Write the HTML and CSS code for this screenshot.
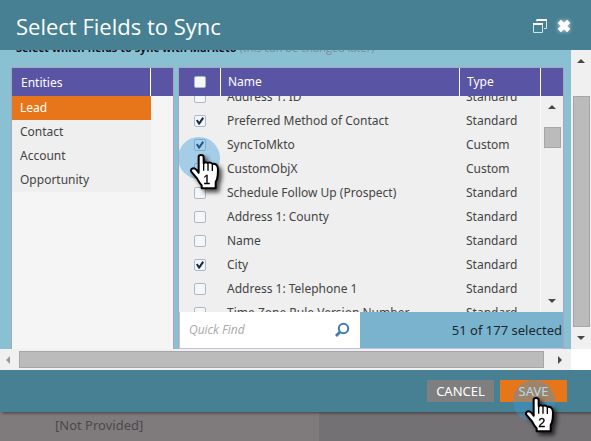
FILE: index.html
```html
<!DOCTYPE html>
<html lang="en">
<head>
<meta charset="utf-8">
<title>Select Fields to Sync</title>
<link rel="stylesheet" href="styles.css">
</head>
<body>
<section class="dialog" role="dialog" aria-labelledby="dialog-title">
  <header class="dialog-header">
    <h1 id="dialog-title">Select Fields to Sync</h1>
    <button class="icon-button" type="button" aria-label="Restore window">
      <svg width="16" height="16" viewBox="0 0 16 16" fill="none" stroke="#d4e5ea">
        <path d="M5 3.5V1.5H14.5V10.5H12"/><path d="M4.500 2H15" stroke="#fff" stroke-width="2"/>
        <path d="M1.500 5.500H10.500V14.500H1.500Z"/><path d="M1 6H11" stroke="#fff" stroke-width="2"/>
      </svg>
    </button>
    <button class="icon-button close" type="button" aria-label="Close">
      <svg width="16" height="16" viewBox="0 0 16 16" fill="none" stroke="#fff" stroke-width="4.600">
        <path d="M3.300 3.300L12.700 12.700M12.700 3.300L3.300 12.700"/>
      </svg>
    </button>
  </header>

  <div class="scroll-frame">
    <main class="content">
      <p class="intro"><strong>Select which fields to sync with Marketo</strong> (this can be changed later)</p>
      <div class="panels">
        <nav class="panel entities" aria-label="Entities">
          <div class="entities-head"><h2>Entities</h2></div>
          <ul>
            <li><a class="selected" href="#lead">Lead</a></li>
            <li><a href="#contact">Contact</a></li>
            <li><a href="#account">Account</a></li>
            <li><a href="#opportunity">Opportunity</a></li>
          </ul>
        </nav>

        <section class="panel fields" aria-label="Fields">
          <table class="fields-head">
            <colgroup><col class="col-check"><col><col class="col-type"><col class="col-bar"></colgroup>
            <thead>
              <tr><th class="check"><input type="checkbox" aria-label="Select all"></th><th>Name</th><th>Type</th><th></th></tr>
            </thead>
          </table>
          <div class="list">
            <div class="list-view">
              <table class="fields-rows">
                <colgroup><col class="col-check"><col><col class="col-type"></colgroup>
                <tbody>
                  <tr><td class="check"><input type="checkbox" id="f1"></td><td><label for="f1">Address 1: ID</label></td><td>Standard</td></tr>
                  <tr><td class="check"><input type="checkbox" id="f2" checked></td><td><label for="f2">Preferred Method of Contact</label></td><td>Standard</td></tr>
                  <tr><td class="check"><input type="checkbox" id="f3" checked><span class="pointer">
                    <svg width="32" height="38" viewBox="0 0 96 114" aria-hidden="true"><path class="hand" d="M29 11Q29 6 36 6Q44 6 44 13V31Q49 25 56 30Q65 26 70 33Q80 30 85 40Q88 45 86 68Q85 80 80 87V106H38V97Q30 88 24 76L6 55Q5 45 16 46Q22 48 29 59Z"/><path class="knuckles" d="M44 28V53M57 33V53M70 36V54"/><text x="43" y="93">1</text></svg>
                  </span></td><td><label for="f3">SyncToMkto</label></td><td>Custom</td></tr>
                  <tr><td class="check"><input type="checkbox" id="f4"></td><td><label for="f4">CustomObjX</label></td><td>Custom</td></tr>
                  <tr><td class="check"><input type="checkbox" id="f5"></td><td><label for="f5">Schedule Follow Up (Prospect)</label></td><td>Standard</td></tr>
                  <tr><td class="check"><input type="checkbox" id="f6"></td><td><label for="f6">Address 1: County</label></td><td>Standard</td></tr>
                  <tr><td class="check"><input type="checkbox" id="f7"></td><td><label for="f7">Name</label></td><td>Standard</td></tr>
                  <tr><td class="check"><input type="checkbox" id="f8" checked></td><td><label for="f8">City</label></td><td>Standard</td></tr>
                  <tr><td class="check"><input type="checkbox" id="f9"></td><td><label for="f9">Address 1: Telephone 1</label></td><td>Standard</td></tr>
                  <tr><td class="check"><input type="checkbox" id="f10"></td><td><label for="f10">Time Zone Rule Version Number</label></td><td>Standard</td></tr>
                </tbody>
              </table>
            </div>
            <div class="scrollbar vertical inner">
              <svg class="arrow" width="8" height="4" viewBox="0 0 8 4"><path d="M4 0L8 4H0Z"/></svg>
              <div class="thumb"></div>
              <svg class="arrow" width="8" height="4" viewBox="0 0 8 4"><path d="M0 0H8L4 4Z"/></svg>
            </div>
          </div>
          <div class="find-bar">
            <div class="find">
              <input type="text" placeholder="Quick Find" aria-label="Quick Find">
              <svg width="16" height="16" viewBox="0 0 16 16" fill="none" stroke="#3f7cb8"><circle cx="9.500" cy="6.500" r="4.700" stroke-width="2"/><path d="M6 10L2 14" stroke-width="2.800"/></svg>
            </div>
            <p>51 of 177 selected</p>
          </div>
        </section>
      </div>
    </main>
    <div class="scrollbar vertical outer">
      <svg class="arrow" width="8" height="4" viewBox="0 0 8 4"><path d="M4 0L8 4H0Z"/></svg>
      <div class="thumb"></div>
      <svg class="arrow" width="8" height="4" viewBox="0 0 8 4"><path d="M0 0H8L4 4Z"/></svg>
    </div>
    <div class="scrollbar horizontal">
      <svg class="arrow dim" width="4" height="8" viewBox="0 0 4 8"><path d="M4 0V8L0 4Z"/></svg>
      <div class="thumb"></div>
      <svg class="arrow" width="4" height="8" viewBox="0 0 4 8"><path d="M0 0L4 4L0 8Z"/></svg>
    </div>
  </div>

  <footer class="dialog-footer">
    <button class="button" type="button">CANCEL</button>
    <button class="button primary" type="button">SAVE<span class="pointer save-pointer">
      <svg width="32" height="38" viewBox="0 0 96 114" aria-hidden="true"><path class="hand" d="M29 11Q29 6 36 6Q44 6 44 13V31Q49 25 56 30Q65 26 70 33Q80 30 85 40Q88 45 86 68Q85 80 80 87V106H38V97Q30 88 24 76L6 55Q5 45 16 46Q22 48 29 59Z"/><path class="knuckles" d="M44 28V53M57 33V53M70 36V54"/><text x="43" y="93">2</text></svg>
    </span></button>
  </footer>
</section>
<div class="page">
  <p>[Not Provided]</p>
  <div class="page-side"></div>
</div>
</body>
</html>
```

FILE: styles.css
```css
* { box-sizing: border-box; }

body {
  margin: 0;
  height: 100vh;
  display: flex;
  flex-direction: column;
  overflow: hidden;
  font: 12px/24px "Noto Sans", "Open Sans", sans-serif;
  color: #444;
  background: #7f7b7d;
}

h1, h2, p, ul { margin: 0; padding: 0; font-weight: 400; }
ul { list-style: none; }
button { font: inherit; border: 0; padding: 0; }

.dialog {
  position: relative;
  z-index: 1;
  flex: 1;
  min-height: 0;
  display: flex;
  flex-direction: column;
  background: #468092;
  box-shadow: 2px 1px 3px rgba(0, 0, 0, 0.5);
}

.dialog-header {
  flex: none;
  display: flex;
  align-items: center;
  gap: 8px;
  height: 50px;
  padding: 2px 19px 0 16px;
}
.dialog-header h1 {
  flex: 1;
  font-family: "Open Sans", "Noto Sans", sans-serif;
  font-size: 22px;
  line-height: 30px;
  color: #fff;
}
.icon-button { background: none; display: flex; }
.close { filter: drop-shadow(0 0 2px rgba(255, 255, 255, 0.7)); }

.scroll-frame {
  flex: 1;
  min-height: 0;
  display: grid;
  grid-template-columns: minmax(0, 1fr) 20px;
  grid-template-rows: minmax(0, 1fr) 21px;
  background: #fff;
}

.content {
  display: flex;
  flex-direction: column;
  min-height: 0;
  overflow: hidden;
  padding: 0 7px 0 11px;
  background: #89c1d3;
}
.intro {
  flex: none;
  margin: -14px 0 7px;
  padding-left: 5px;
  font: 11px/24px "Open Sans", "Noto Sans", sans-serif;
  color: #80868a;
}
.intro strong { color: #111; }

.panels { flex: 1; min-height: 0; display: flex; gap: 4px; }
.panel {
  border: 1px solid #a9a5c0;
  border-bottom: 0;
  background: #f5f5f5;
}
.entities { width: 163px; flex: none; }
.entities-head { display: flex; height: 28px; background: #5a54a4; }
.entities-head h2 {
  width: 139px;
  padding-left: 9px;
  border-right: 1px solid #fff;
  font-size: 12px;
  line-height: 29px;
  color: #fff;
}
.entities ul { width: 139px; background: #efefef; }
.entities a {
  display: block;
  padding-left: 8px;
  color: #444;
  text-decoration: none;
}
.entities .selected { background: #e7761a; color: #fff; }

.fields { flex: 1; min-width: 0; display: flex; flex-direction: column; }
table { width: 100%; table-layout: fixed; border-collapse: separate; border-spacing: 0; }
.col-check { width: 42px; }
.col-type { width: 81px; }
.col-bar { width: 22px; }
.fields-head { flex: none; background: #5a54a4; color: #fff; }
th {
  height: 28px;
  padding: 0 0 0 7px;
  border-right: 1px solid #fff;
  font-weight: 400;
  text-align: left;
}
th:last-child { border-right: 0; }
td { height: 24px; padding: 0 0 0 6px; line-height: 23px; vertical-align: top; white-space: nowrap; }
td:last-child { padding-left: 7px; }
.check { position: relative; padding: 0; text-align: center; vertical-align: middle; line-height: 0; }

input[type="checkbox"] {
  appearance: none;
  width: 12px;
  height: 12px;
  margin: 0;
  border: 1px solid #a9b9cb;
  border-radius: 2px;
  background: #f4f6f8;
  vertical-align: middle;
}
input[type="checkbox"]:checked::after {
  content: "";
  display: block;
  width: 8px;
  height: 8px;
  margin: 1px;
  background: #1f2b40;
  clip-path: polygon(0 45%, 18% 32%, 40% 58%, 80% 0, 100% 18%, 45% 98%, 32% 98%);
}

.list { flex: 1; min-height: 0; display: flex; overflow: hidden; background: #efefef; }
.list-view { flex: 1; min-width: 0; }
.fields-rows { margin-top: -11px; }

.find-bar {
  flex: none;
  display: flex;
  height: 37px;
  border: 1px solid #c3c0e0;
  border-top: 0;
  border-right: 0;
  background: #79b3cd;
}
.find {
  display: flex;
  align-items: center;
  width: 180px;
  padding: 0 10px 0 9px;
  background: #fff;
}
.find input {
  flex: 1;
  min-width: 0;
  border: 0;
  padding: 0;
  background: none;
  font: italic 12px/24px "Open Sans", "Noto Sans", sans-serif;
}
.find input::placeholder { color: #a8a8a8; }
.find-bar p { flex: 1; padding-right: 1px; font-size: 13px; line-height: 36px; text-align: right; color: #1c2830; }

.scrollbar { display: flex; align-items: center; background: #f0f0f0; }
.vertical { flex-direction: column; }
.arrow { flex: none; fill: #484848; }
.dim { fill: #999; }
.thumb { border: 1px solid #a6a6a6; background: #bbb; }
.inner { flex: none; width: 23px; padding: 9px 0; border-left: 1px solid #fafafa; }
.inner .thumb { width: 17px; height: 21px; margin: 18px 0 auto; }
.outer { padding: 9px 0; }
.outer .thumb { flex: 1; width: 17px; margin: 33px 0 9px; }
.horizontal { padding: 0 9px 0 6px; }
.horizontal .thumb { flex: 1; height: 17px; margin: 0 14px 0 9px; }

.dialog-footer {
  flex: none;
  display: flex;
  justify-content: flex-end;
  gap: 6px;
  padding: 10px 24px 10px 0;
}
.button {
  position: relative;
  width: 67px;
  height: 22px;
  background: #7f7f7f;
  color: #fff;
  font-size: 13px;
  line-height: 20px;
}
.primary { background: #e7761a; }

/* Click marker: translucent disc with a numbered hand */
.pointer {
  position: absolute;
  z-index: 2;
  left: -1px;
  top: 4px;
  width: 42px;
  height: 42px;
  border-radius: 50%;
  background: rgba(56, 155, 220, 0.4);
}
.save-pointer { left: 13px; top: 0; }
.pointer svg {
  position: absolute;
  left: 11px;
  top: 16px;
  overflow: visible;
  filter: drop-shadow(3px 3px 2px rgba(0, 0, 0, 0.7));
}
.hand { fill: #fff; stroke: #000; stroke-width: 6; stroke-linejoin: round; }
.knuckles { fill: none; stroke: #000; stroke-width: 4; }
.pointer text { font: 38px "Liberation Sans", sans-serif; fill: #000; stroke: #000; stroke-width: 1; }

.page { flex: none; display: flex; height: 29px; }
.page p { width: 54%; padding-left: 55px; font-size: 13px; line-height: 26px; color: #4b484b; }
.page-side { flex: 1; background: #747174; }
```
